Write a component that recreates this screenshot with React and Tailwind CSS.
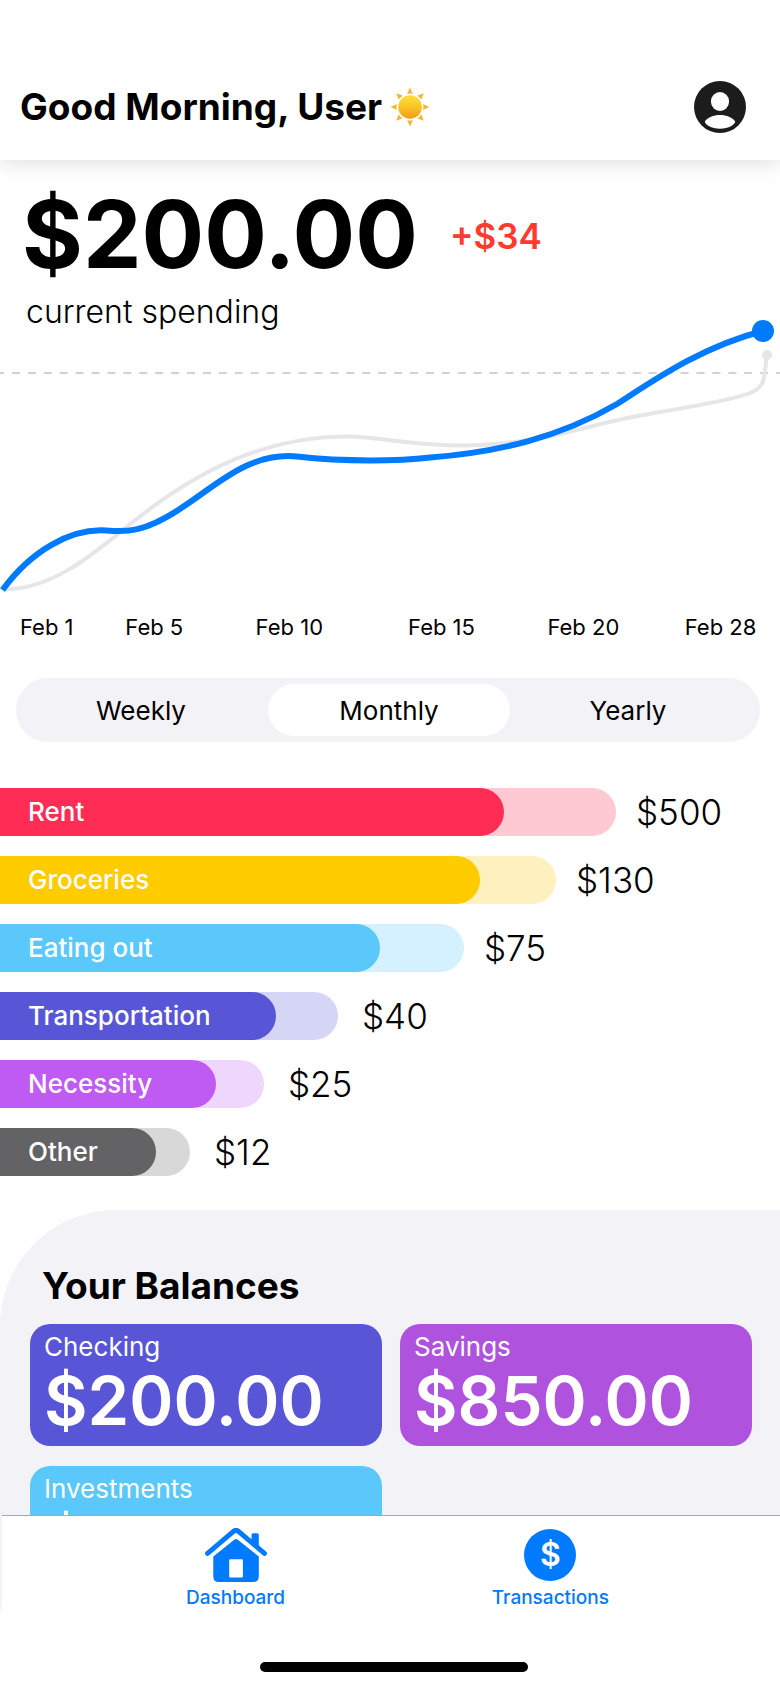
const periods = ['Weekly', 'Monthly', 'Yearly'];
const active = 'Monthly';

const spending = [
  { name: 'Rent', amount: '$500', track: 'bg-[#ffc9d3]', fill: 'bg-[#ff2d55]', total: 616, used: 504, gap: 'gap-5' },
  { name: 'Groceries', amount: '$130', track: 'bg-[#fff0bf]', fill: 'bg-[#ffcc00]', total: 556, used: 480, gap: 'gap-5' },
  { name: 'Eating out', amount: '$75', track: 'bg-[#d5f0fe]', fill: 'bg-[#5ac8fa]', total: 464, used: 380, gap: 'gap-5' },
  { name: 'Transportation', amount: '$40', track: 'bg-[#d5d5f5]', fill: 'bg-[#5856d6]', total: 338, used: 276, gap: 'gap-6' },
  { name: 'Necessity', amount: '$25', track: 'bg-[#efd6fc]', fill: 'bg-[#bf5af2]', total: 264, used: 216, gap: 'gap-6' },
  { name: 'Other', amount: '$12', track: 'bg-[#d8d8d8]', fill: 'bg-[#636366]', total: 190, used: 156, gap: 'gap-6' },
];

const balances = [
  { name: 'Checking', amount: '$200.00', color: 'bg-[#5856d6]' },
  { name: 'Savings', amount: '$850.00', color: 'bg-[#af52de]' },
  { name: 'Investments', amount: '$500.00', color: 'bg-[#5ac8fa]' },
];

function Sun() {
  const rays = [0, 45, 90, 135, 180, 225, 270, 315];
  return (
    <svg viewBox="0 0 40 40" className="size-10 shrink-0" aria-hidden="true">
      <defs>
        <linearGradient id="disc" x1="0" y1="0" x2="0" y2="1">
          <stop offset="0" stopColor="#fde03c" />
          <stop offset="0.5" stopColor="#fbc524" />
          <stop offset="1" stopColor="#f09a15" />
        </linearGradient>
      </defs>
      {rays.map((r) => (
        <path key={r} d="M20 0.6 L22.9 7 Q20 5.800 17.100 7 Z" fill="#f3b62c" transform={`rotate(${r} 20 20)`} />
      ))}
      <circle cx="20" cy="20" r="11.8" fill="url(#disc)" />
    </svg>
  );
}

function Profile() {
  return (
    <svg viewBox="0 0 52 52" className="size-[52px]" aria-hidden="true">
      <circle cx="26" cy="26" r="26" fill="#1c1c1e" />
      <rect x="17" y="11" width="18" height="19" rx="9" fill="#fff" />
      <path d="M10.8 40.6C13.6 36.4 19.4 34 26 34s12.4 2.4 15.2 6.6C41.4 43.4 34.6 47.8 26 47.8S10.600 43.400 10.800 40.600Z" fill="#fff" />
    </svg>
  );
}

function House() {
  return (
    <svg viewBox="0 0 62 54" className="h-[54px] w-[62px]" aria-hidden="true">
      <path
        d="M2.600 25.300 L28.500 3.300 Q31 1.500 33.500 3.300 L59.400 25.300"
        fill="none"
        stroke="#007aff"
        strokeWidth="5"
        strokeLinecap="round"
        strokeLinejoin="round"
      />
      <path d="M46.500 7 Q46.500 5.200 48.300 5.200 H52 Q53.800 5.200 53.800 7 V20.500 L46.500 14.200 Z" fill="#007aff" />
      <path
        fillRule="evenodd"
        d="M8.300 28.500 L29.500 11.500 Q31 10.300 32.500 11.500 L53.800 28.500 V48.500 Q53.800 54 48.300 54 H13.800 Q8.300 54 8.300 48.500 Z M25.200 31.200 Q24.200 31.200 24.200 32.200 V48.600 Q24.200 49.600 25.200 49.600 H36.900 Q37.900 49.600 37.900 48.600 V32.200 Q37.900 31.200 36.900 31.200 Z"
        fill="#007aff"
      />
    </svg>
  );
}

function Chart() {
  return (
    <svg viewBox="0 310 780 290" className="pointer-events-none -mt-[30px] block w-full" role="img" aria-label="Spending over February">
      <path d="M0 373H780" stroke="#d1d1d6" strokeWidth="2" strokeDasharray="8 7.920" strokeDashoffset="4" />
      <path
        d="M4 589.500 C52 589 92 555 123 530 C165 496 240 437 345 436.500 C385 437 410 446 467 445.500 C540 444 575 428 640 415.500 C690 407 745 398 756 390 C766 384 764 373 767 355"
        fill="none"
        stroke="#e5e5ea"
        strokeWidth="4"
      />
      <circle cx="767" cy="355" r="5" fill="#e5e5ea" />
      <path
        d="M2.500 590 C30 552 70 528 106 530.500 C124 532 144 534 185 505.500 C218 484 250 452 297 456.500 C345 462 400 461 430 457.500 C500 452 560 437 617 404 C650 383 700 347 763 331"
        fill="none"
        stroke="#007aff"
        strokeWidth="6"
      />
      <circle cx="763" cy="331" r="11" fill="#007aff" />
    </svg>
  );
}

export default function App() {
  return (
    <div className="flex h-screen flex-col overflow-hidden bg-white font-['Inter',sans-serif] text-black">
      <header className="relative z-10 flex shrink-0 items-center justify-between bg-white pt-[54px] pr-[34px] pl-5 shadow-[0_4px_20px_rgba(0,0,0,0.12)]">
        <div className="flex h-[106px] items-center gap-2">
          <h1 className="text-[37px] font-bold">Good Morning, User</h1>
          <Sun />
        </div>
        <button type="button" aria-label="Profile">
          <Profile />
        </button>
      </header>

      <main className="min-h-0 flex-1 overflow-y-auto [scrollbar-width:none]">
        <section>
          <div className="flex items-center gap-8 pt-6 pl-[22px]">
            <p className="text-[93px] leading-[100px] font-bold">$200.00</p>
            <p className="pt-1 text-[35px] font-semibold text-[#ff3b30]">+$34</p>
          </div>
          <p className="pl-[26px] text-[32px] leading-[56px] font-light">current spending</p>
          <Chart />
          <div className="grid grid-cols-[105fr_130fr_152fr_139fr_137fr_95fr] pl-5 text-[22px] leading-[54px]">
            <span>Feb 1</span>
            <span>Feb 5</span>
            <span>Feb 10</span>
            <span>Feb 15</span>
            <span>Feb 20</span>
            <span>Feb 28</span>
          </div>
        </section>

        <div className="mt-6 mr-5 ml-4 grid h-16 grid-cols-[246fr_242fr_244fr] rounded-full bg-[#f2f2f7] p-[6px]">
          {periods.map((p) => (
            <button
              key={p}
              type="button"
              aria-pressed={p === active}
              className={p === active ? 'rounded-full bg-white text-[26px]' : 'rounded-full pr-2 text-[26px]'}
            >
              {p}
            </button>
          ))}
        </div>

        <ul className="mt-[46px] flex flex-col gap-5">
          {spending.map((s) => (
            <li key={s.name} className={`flex items-center ${s.gap}`}>
              <div className={`h-12 rounded-r-full ${s.track}`} style={{ width: `${(s.total / 780) * 100}%` }}>
                <div
                  className={`flex h-12 items-center rounded-r-full pb-0.5 pl-7 text-[26px] font-medium whitespace-nowrap text-white ${s.fill}`}
                  style={{ width: `${(s.used / s.total) * 100}%` }}
                >
                  {s.name}
                </div>
              </div>
              <span className="text-[35px] leading-none font-light">{s.amount}</span>
            </li>
          ))}
        </ul>

        <section className="mt-[34px] rounded-tl-[116px] bg-[#f2f2f7] pt-[52px] pr-7 pb-8 pl-[30px]">
          <h2 className="pl-3 text-[37px] leading-[48px] font-bold">Your Balances</h2>
          <div className="mt-[14px] grid grid-cols-2 gap-x-[18px] gap-y-5">
            {balances.map((b) => (
              <article key={b.name} className={`h-[122px] rounded-[20px] px-[14px] pt-[6px] text-white ${b.color}`}>
                <h3 className="text-[26px] leading-[34px]">{b.name}</h3>
                <p className="text-[67px] leading-[74px] font-semibold">{b.amount}</p>
              </article>
            ))}
          </div>
        </section>
      </main>

      <nav className="shrink-0 bg-linear-to-b from-[#f2f2f7] from-50% to-white to-60% pl-0.5">
        <div className="border-t border-[#a7a7ac] bg-white pb-4">
          <div className="flex justify-between pr-[171px] pl-[184px] text-[19px] leading-7 font-medium text-[#007aff]">
            <a href="#dashboard" className="flex flex-col items-center gap-[2px] pt-3">
              <House />
              Dashboard
            </a>
            <a href="#transactions" className="flex flex-col items-center gap-[2px] pt-3">
              <span className="flex h-[54px] items-center">
                <span className="flex size-[52px] items-center justify-center rounded-full bg-[#007aff] text-[32px] leading-none font-semibold text-white">
                  $
                </span>
              </span>
              Transactions
            </a>
          </div>
          <div className="mt-[50px] ml-[33.2%] h-[10px] w-[34.4%] rounded-full bg-black" />
        </div>
      </nav>
    </div>
  );
}
